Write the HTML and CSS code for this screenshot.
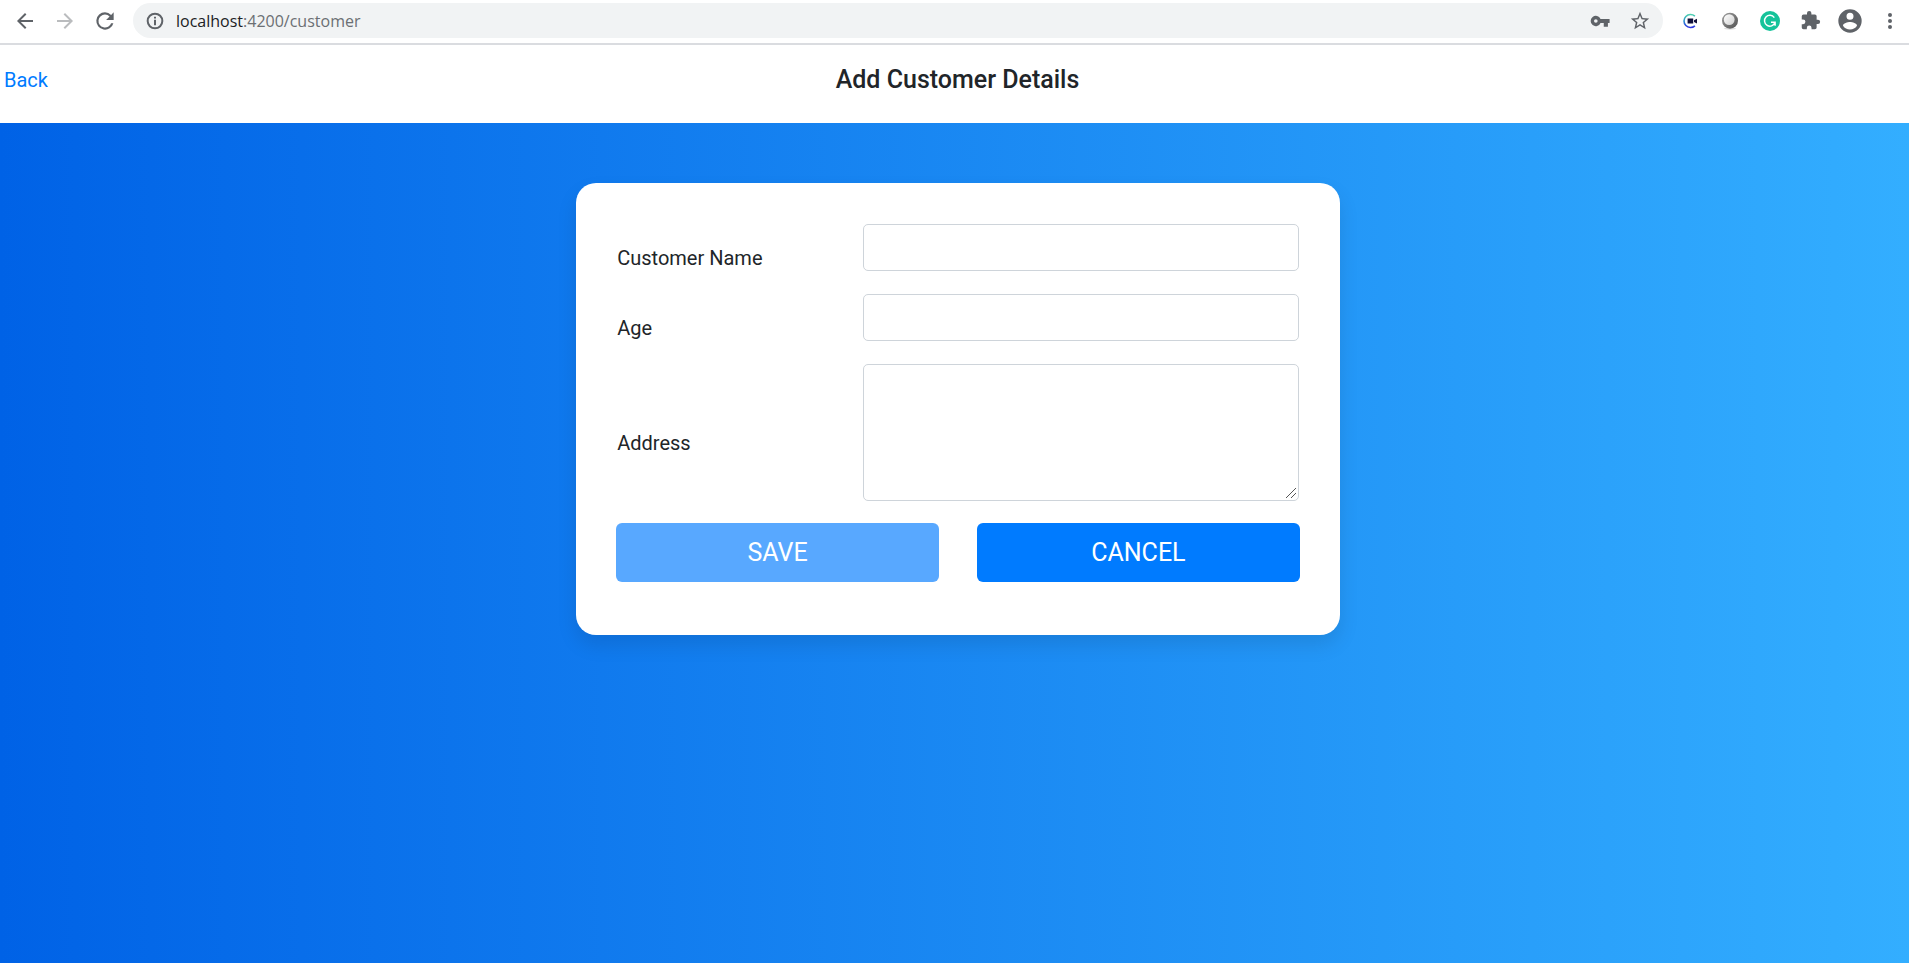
FILE: index.html
```html
<!DOCTYPE html>
<html lang="en">
<head>
<meta charset="utf-8">
<title>Add Customer Details</title>
<link rel="stylesheet" href="styles.css">
</head>
<body>
<div class="toolbar">
  <button class="tool" type="button" aria-label="Back"><svg width="24" height="24" viewBox="0 0 24 24" fill="#5f6368"><path d="M20 11H7.83l5.59-5.59L12 4l-8 8 8 8 1.41-1.41L7.83 13H20z"/></svg></button>
  <button class="tool" type="button" aria-label="Forward"><svg width="24" height="24" viewBox="0 0 24 24" fill="#babcbe"><path d="M12 4l-1.41 1.41L16.17 11H4v2h12.17l-5.58 5.59L12 20l8-8z"/></svg></button>
  <button class="tool" type="button" aria-label="Reload"><svg width="26" height="26" viewBox="0 0 24 24" fill="#5f6368"><path d="M17.65 6.35A7.96 7.96 0 0 0 12 4a8 8 0 1 0 7.73 10h-2.08A6 6 0 1 1 12 6c1.66 0 3.14.69 4.22 1.78L13 11h7V4z"/></svg></button>
  <div class="omnibox">
    <svg class="info" width="20" height="20" viewBox="0 0 24 24" fill="#5f6368"><path d="M10.8 17h2.400v-6.500h-2.400zm1.200-15a10 10 0 1 0 0 20 10 10 0 0 0 0-20zm0 17.600a7.600 7.600 0 1 1 0-15.200 7.600 7.600 0 0 1 0 15.200zM10.800 9h2.400V6.800h-2.400z"/></svg>
    <div class="url" role="textbox" aria-label="Address bar">localhost<span class="url-path">:4200/customer</span></div>
    <button class="tool" type="button" aria-label="Passwords"><svg width="20" height="20" viewBox="0 0 24 24" fill="#5f6368"><path d="M12.650 9.500A6.200 6.200 0 1 0 12.650 14.500H16.500v4.500h5v-4.500h2v-5zM7 14.200a2.200 2.200 0 1 1 0-4.400 2.200 2.200 0 0 1 0 4.400z"/></svg></button>
    <button class="tool" type="button" aria-label="Bookmark"><svg width="22" height="22" viewBox="0 0 24 24" fill="#5f6368"><path d="M22 9.24l-7.19-.62L12 2 9.19 8.63 2 9.24l5.46 4.73L5.82 21 12 17.27 18.18 21l-1.63-7.03zM12 15.4l-3.76 2.27 1-4.28-3.32-2.88 4.38-.38L12 6.1l1.71 4.04 4.38.38-3.32 2.88 1 4.28z"/></svg></button>
  </div>
  <button class="tool" type="button" aria-label="Video call extension"><svg width="16" height="16" viewBox="0 0 16 16"><defs><linearGradient id="ring" x1="0" y1="0" x2="0" y2="1"><stop offset="0" stop-color="#4fd0b0"/><stop offset=".5" stop-color="#2d8fd0"/><stop offset="1" stop-color="#2f35e0"/></linearGradient></defs><path d="M12.900 3.200A6.500 6.500 0 1 0 12.900 12.800" fill="none" stroke="url(#ring)" stroke-width="1.600"/><path d="M5.600 5.500h5.600v5H5.600zM12 7.300l3-1.500v4.600L12 8.900z" fill="#11103a"/></svg></button>
  <button class="tool" type="button" aria-label="Moon extension"><svg width="18" height="18" viewBox="0 0 18 18"><defs><linearGradient id="orb" x1="0" y1="0" x2="1" y2="1"><stop offset="0" stop-color="#a0a0a0"/><stop offset="1" stop-color="#505050"/></linearGradient><linearGradient id="face" x1="0" y1="0" x2="1" y2="1"><stop offset="0" stop-color="#fff"/><stop offset="1" stop-color="#cfcfcf"/></linearGradient></defs><ellipse cx="9" cy="16.500" rx="6" ry="1.200" fill="#ddd"/><circle cx="9" cy="8.700" r="8" fill="url(#orb)"/><circle cx="8.200" cy="7.600" r="5.400" fill="url(#face)"/></svg></button>
  <button class="tool" type="button" aria-label="Grammar extension"><svg width="20" height="20" viewBox="0 0 20 20"><circle cx="10" cy="10" r="10" fill="#15c39a"/><path d="M14.300 6.600A5.400 5.400 0 1 0 15 11.600M11 11.300h4.100v3.500" fill="none" stroke="#fff" stroke-width="1.500"/></svg></button>
  <button class="tool" type="button" aria-label="Extensions"><svg width="21" height="21" viewBox="0 0 24 24" fill="#5f6368"><path d="M20.500 11H19V7a2 2 0 0 0-2-2h-4V3.500a2.500 2.500 0 0 0-5 0V5H4a2 2 0 0 0-2 2v3.800h1.500a2.700 2.700 0 0 1 0 5.400H2V20a2 2 0 0 0 2 2h3.800v-1.500a2.700 2.700 0 0 1 5.400 0V22H17a2 2 0 0 0 2-2v-4h1.500a2.500 2.500 0 0 0 0-5z"/></svg></button>
  <button class="tool" type="button" aria-label="Profile"><svg width="28" height="28" viewBox="0 0 24 24" fill="#5f6368"><path d="M12 2a10 10 0 1 0 0 20 10 10 0 0 0 0-20zm0 3a3 3 0 1 1 0 6 3 3 0 0 1 0-6zm0 14.200a7.200 7.200 0 0 1-6-3.220c.03-1.990 4-3.080 6-3.080s5.970 1.090 6 3.080a7.200 7.200 0 0 1-6 3.220z"/></svg></button>
  <button class="tool tool-last" type="button" aria-label="Menu"><svg width="24" height="24" viewBox="0 0 24 24" fill="#5f6368"><circle cx="12" cy="6" r="2"/><circle cx="12" cy="12" r="2"/><circle cx="12" cy="18" r="2"/></svg></button>
</div>
<header class="header">
  <a class="back" href="#">Back</a>
  <h1 class="title">Add Customer Details</h1>
</header>
<main class="main">
  <form class="card">
    <div class="fields">
      <div class="row">
        <label class="label" for="name">Customer Name</label>
        <input class="field" id="name" type="text">
      </div>
      <div class="row">
        <label class="label" for="age">Age</label>
        <input class="field" id="age" type="text">
      </div>
      <div class="row">
        <label class="label" for="address">Address</label>
        <textarea class="field field-tall" id="address"></textarea>
      </div>
    </div>
    <div class="actions">
      <button class="btn" type="submit" disabled>SAVE</button>
      <button class="btn" type="button">CANCEL</button>
    </div>
  </form>
</main>
</body>
</html>
```
FILE: styles.css
```css
* {
  box-sizing: border-box;
}

body {
  margin: 0;
  min-height: 100vh;
  display: flex;
  flex-direction: column;
  background: #fff;
  color: #212529;
  font-family: Roboto, "Liberation Sans", sans-serif;
  font-size: 20px;
  line-height: 30px;
}

.toolbar {
  display: flex;
  align-items: center;
  padding: 3px 0 5px 5px;
  border-bottom: 2px solid #dadce0;
}

.tool {
  display: flex;
  align-items: center;
  justify-content: center;
  flex: none;
  width: 40px;
  height: 35px;
  padding: 0;
  border: 0;
  background: none;
}

.tool-last {
  width: 39px;
}

.omnibox {
  flex: 1;
  display: flex;
  align-items: center;
  height: 35px;
  margin: 0 7px 0 8px;
  padding: 0 3px 0 12px;
  border-radius: 18px;
  background: #f1f3f4;
}

.info {
  flex: none;
}

.url {
  flex: 1;
  padding-left: 11px;
  color: #202124;
  font-family: "Open Sans", "Noto Sans", sans-serif;
  font-size: 16px;
  line-height: 24px;
}

.url-path {
  color: #6b6f73;
}

.header {
  display: grid;
  grid-template-columns: 1fr auto 1fr;
  align-items: center;
  padding: 17px 0 25px 4px;
  min-height: 78px;
}

.back {
  color: #007bff;
  line-height: 34px;
  text-decoration: none;
}

.title {
  margin: 0;
  padding-left: 2px;
  font-size: 25px;
  font-weight: 500;
  line-height: 36px;
}

.main {
  flex: 1;
  display: flex;
  justify-content: center;
  align-items: flex-start;
  padding: 60px 0 60px 7px;
  background: linear-gradient(to right, #0062e6, #33aeff);
}

.card {
  width: 40vw;
  min-width: 560px;
  display: flex;
  flex-direction: column;
  gap: 22px;
  padding: 41px 40px 53px;
  border-radius: 20px;
  background: #fff;
  box-shadow: 0 10px 20px rgba(0, 0, 0, 0.1);
}

.fields {
  display: flex;
  flex-direction: column;
  gap: 23px;
}

.row {
  display: grid;
  grid-template-columns: 9fr 16fr;
  align-items: center;
  padding: 0 1px;
}

.label {
  padding-top: 20px;
  line-height: 24px;
}

.field {
  width: 100%;
  height: 47px;
  padding: 8px 15px;
  border: 1px solid #ced4da;
  border-radius: 5px;
  background: #fff;
  color: #495057;
  font: inherit;
}

.field-tall {
  display: block;
  height: 137px;
}

.field-tall::-webkit-resizer {
  background: url("data:image/svg+xml,%3Csvg xmlns='http://www.w3.org/2000/svg' width='15' height='15'%3E%3Cpath d='M3 13L13 3M8 13l5-5' stroke='%23555' fill='none'/%3E%3C/svg%3E") right bottom no-repeat;
}

.actions {
  display: grid;
  grid-template-columns: 1fr 1fr;
  gap: 38px;
}

.btn {
  height: 59px;
  border: 0;
  border-radius: 6px;
  background: #007bff;
  color: #fff;
  font-family: inherit;
  font-size: 25px;
  line-height: 38px;
}

.btn:disabled {
  opacity: 0.65;
}
```
